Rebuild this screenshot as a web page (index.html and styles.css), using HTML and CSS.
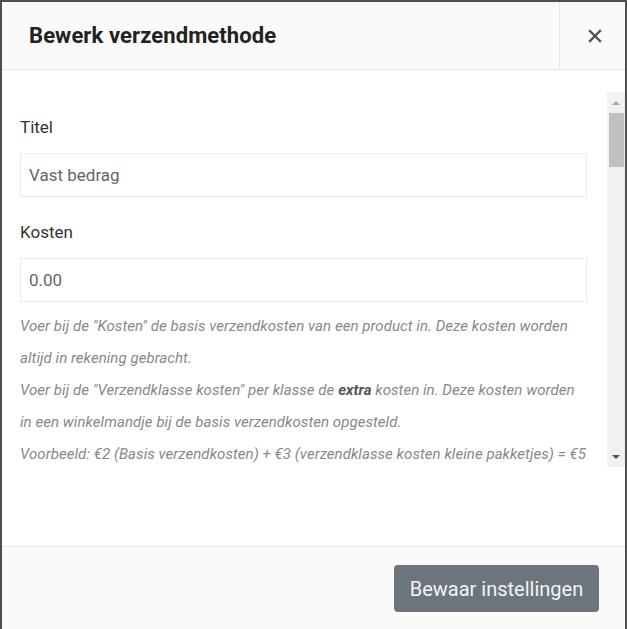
FILE: index.html
```html
<!DOCTYPE html>
<html lang="nl">
<head>
<meta charset="utf-8">
<title>Bewerk verzendmethode</title>
<link rel="stylesheet" href="styles.css">
</head>
<body>
<div class="modal">
  <div class="modal-header">
    <h2 class="modal-title">Bewerk verzendmethode</h2>
    <button class="close-btn" aria-label="Sluiten">
      <svg width="14" height="14" viewBox="0 0 14 14"><path d="M2 2 L12 12 M12 2 L2 12" stroke="#555" stroke-width="2.4" stroke-linecap="square" fill="none"/></svg>
    </button>
  </div>
  <div class="modal-body">
    <div class="scroll-area">
      <div class="scroll-content">
        <label class="field-label">Titel</label>
        <div class="input">Vast bedrag</div>
        <label class="field-label">Kosten</label>
        <div class="input input-last">0.00</div>
        <div class="help">
          <span class="help-line">Voer bij de "Kosten" de basis verzendkosten van een product in. Deze kosten worden</span>
          <span class="help-line">altijd in rekening gebracht.</span>
          <span class="help-line">Voer bij de "Verzendklasse kosten" per klasse de <b>extra</b> kosten in. Deze kosten worden</span>
          <span class="help-line">in een winkelmandje bij de basis verzendkosten opgesteld.</span>
          <span class="help-line">Voorbeeld: €2 (Basis verzendkosten) + €3 (verzendklasse kosten kleine pakketjes) = €5</span>
        </div>
      </div>
      <div class="scrollbar">
        <div class="sb-btn"><span class="tri-up"></span></div>
        <div class="sb-thumb"></div>
        <div class="sb-track"></div>
        <div class="sb-btn"><span class="tri-down"></span></div>
      </div>
    </div>
  </div>
  <div class="modal-footer">
    <button class="btn-save">Bewaar instellingen</button>
  </div>
</div>
</body>
</html>
```

FILE: styles.css
```css
* { box-sizing: border-box; }
html, body { margin: 0; padding: 0; }
body {
  background: #4f4f4f;
  font-family: Roboto, "Liberation Sans", Arial, sans-serif;
  height: 629px;
  overflow: hidden;
}
.modal {
  margin: 2px 0 0 2px;
  width: 623px;
  height: 640px;
  background: #fff;
  display: flex;
  flex-direction: column;
}
.modal-header {
  height: 68px;
  flex: none;
  display: flex;
  align-items: center;
  background: #fafafa;
  border-bottom: 1px solid #e6e6e6;
}
.modal-title {
  flex: 1;
  margin: 0;
  padding-left: 27px;
  font-size: 22px;
  letter-spacing: 0.1px;
  font-weight: 700;
  color: #222;
  line-height: 1;
}
.close-btn {
  width: 66px;
  height: 100%;
  border: 0;
  border-left: 1px solid #e6e6e6;
  background: transparent;
  padding: 0 0 0 4px;
  display: flex;
  align-items: center;
  justify-content: center;
}
.modal-body {
  height: 476px;
  flex: none;
  padding: 22px 0 0 18px;
}
.scroll-area {
  height: 375px;
  display: flex;
  overflow: hidden;
}
.scroll-content {
  flex: 1;
  min-width: 0;
  padding: 23px 20px 0 0;
  overflow: hidden;
}
.field-label {
  display: block;
  font-size: 17px;
  line-height: 24px;
  color: #333;
  margin-bottom: 14px;
}
.input {
  height: 44px;
  border: 1px solid #ececec;
  padding: 0 8px;
  font-size: 17px;
  line-height: 42px;
  color: #666;
  margin-bottom: 23px;
}
.input-last { margin-bottom: 8px; }
.help {
  font-size: 15px;
  font-style: italic;
  line-height: 32px;
  letter-spacing: 0.06px;
  color: #888;
}
.help-line {
  display: block;
  white-space: nowrap;
}
.help b { color: #555; font-weight: 700; }
.scrollbar {
  width: 18px;
  flex: none;
  background: #f1f1f1;
  display: flex;
  flex-direction: column;
}
.sb-btn {
  height: 21px;
  display: flex;
  align-items: center;
  justify-content: center;
}
.sb-thumb {
  height: 54px;
  margin: 0 1px 0 2px;
  background: #c1c1c1;
}
.sb-track { flex: 1; }
.tri-up, .tri-down {
  width: 0; height: 0;
  border-left: 4px solid transparent;
  border-right: 4px solid transparent;
}
.tri-up { border-bottom: 4px solid #a3a3a3; }
.tri-down { border-top: 4px solid #505050; }
.modal-footer {
  flex: 1;
  background: #fafafa;
  border-top: 1px solid #e6e6e6;
  display: flex;
  justify-content: flex-end;
  align-items: flex-start;
  padding: 18px 26px 0 0;
}
.btn-save {
  width: 205px;
  height: 47px;
  border: 0;
  border-radius: 4px;
  background: #6c757d;
  color: #f4f4f4;
  font-family: Roboto, "Liberation Sans", Arial, sans-serif;
  font-size: 20px;
  padding: 0;
}
```
